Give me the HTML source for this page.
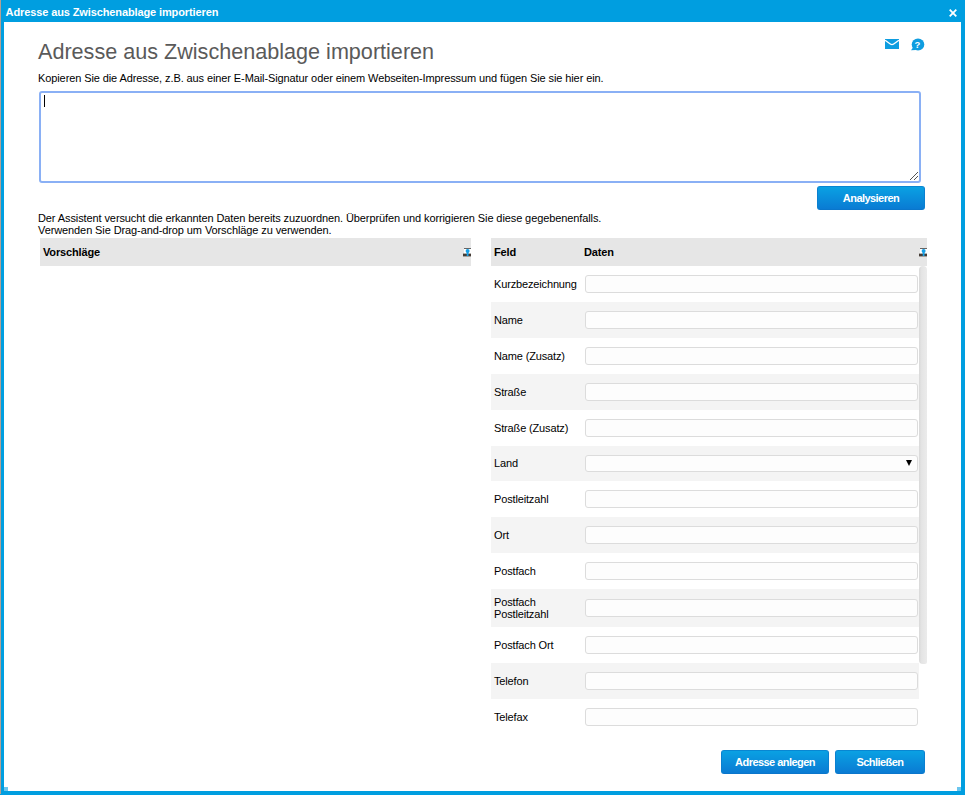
<!DOCTYPE html>
<html lang="de">
<head>
<meta charset="utf-8">
<title>Adresse aus Zwischenablage importieren</title>
<style>
html,body{margin:0;padding:0;}
body{width:965px;height:795px;position:relative;overflow:hidden;background:#fff;
  font-family:"Liberation Sans",Arial,sans-serif;font-size:11px;color:#000;}
*{box-sizing:border-box;}
.abs{position:absolute;}
#frame{left:0;top:0;width:965px;height:795px;background:#009ee0;}
#edge{left:0;top:0;width:1px;height:794px;background:#b4a094;}
.cs{width:4px;height:4px;top:787px;background:#6cc6ee;}
#titlebar{left:0;top:0;width:965px;height:22px;}
#titletext{left:5.6px;top:6px;font-weight:bold;font-size:11px;color:#fff;line-height:13px;white-space:nowrap;letter-spacing:-0.115px;}
#close{left:948px;top:8px;width:10px;height:10px;}
#content{left:4px;top:22px;width:957px;height:769px;background:#fff;}
h1{position:absolute;left:38px;top:39px;margin:0;font-size:21.6px;font-weight:normal;color:#5a5a5a;line-height:26px;white-space:nowrap;}
.p{white-space:nowrap;line-height:13px;letter-spacing:-0.1px;}
#ta{left:39px;top:91px;width:882px;height:92px;border:2px solid #8ab0f5;border-radius:3px;background:#fff;}
#caret{left:44px;top:95px;width:1px;height:12px;background:#000;}
.btn{position:absolute;height:24px;border-radius:3px;color:#fff;font-weight:bold;font-size:11px;text-align:center;line-height:22px;letter-spacing:-0.55px;
  background:linear-gradient(#0aa1e3,#0a7bd3);border:1px solid;border-color:#0887d2 #0a80d0 #0a76cb;}
.th{background:#e6e6e6;height:28px;top:238px;font-weight:bold;}
.th span{position:absolute;top:8px;line-height:13px;letter-spacing:-0.15px;}
.row{position:absolute;left:491px;width:428px;}
.row.g{background:#f4f4f4;}
.row .l{position:absolute;left:3px;line-height:12px;letter-spacing:-0.15px;}
.in{position:absolute;left:94px;width:333px;height:18px;border:1px solid #dcdcdc;border-radius:3px;background:#fdfdfd;}
#sb{left:919px;top:266px;width:8px;height:398px;background:linear-gradient(90deg,#d9d9d9,#e5e5e5 35%,#ebebeb);border-radius:4px 4px 2px 4px;}
.arr{position:absolute;right:5px;top:4px;width:0;height:0;border-left:3.5px solid transparent;border-right:3.5px solid transparent;border-top:6px solid #000;}
.hi{position:absolute;top:10px;width:8px;height:9px;overflow:hidden;}
</style>
</head>
<body>
<div id="frame" class="abs"></div>
<div id="edge" class="abs"></div>
<div id="titlebar" class="abs">
  <div id="titletext" class="abs">Adresse aus Zwischenablage importieren</div>
  <svg id="close" class="abs" viewBox="0 0 10 10"><path d="M1.7 1.7 L8.3 8.3 M8.3 1.7 L1.7 8.3" stroke="#fff" stroke-width="1.8" fill="none"/></svg>
</div>
<div id="content" class="abs"></div>
<div class="abs cs" style="left:4px;"></div><div class="abs cs" style="left:957px;"></div>

<h1>Adresse aus Zwischenablage importieren</h1>
<div class="abs p" style="left:38px;top:72px;">Kopieren Sie die Adresse, z.B. aus einer E-Mail-Signatur oder einem Webseiten-Impressum und fügen Sie sie hier ein.</div>

<div id="ta" class="abs"></div>
<svg class="abs" style="left:885px;top:39px;" width="14" height="10" viewBox="0 0 14 10"><rect x="0" y="0" width="14" height="10" fill="#0e9de0"/><path d="M0 1.2 C3 3.2 5.6 5.7 7 5.7 C8.4 5.7 11 3.2 14 1.2" stroke="#fff" stroke-width="1.3" fill="none"/></svg>
<svg class="abs" style="left:910px;top:37px;" width="16" height="15" viewBox="0 0 16 15"><ellipse cx="8" cy="7.55" rx="6.3" ry="6" fill="#0e9de0"/><path d="M3 10.4 L1 13.3 L6 12.9 Z" fill="#0e9de0"/><text x="7.4" y="10.9" text-anchor="middle" font-family="Liberation Sans, Arial, sans-serif" font-weight="bold" font-size="9.5" fill="#fff">?</text></svg>
<svg class="abs" style="left:908px;top:170px;" width="11" height="11" viewBox="0 0 11 11"><path d="M10 2 L2 10 M10 6 L6 10" stroke="#555" stroke-width="1" fill="none" shape-rendering="crispEdges"/></svg>

<div id="caret" class="abs"></div>

<div class="btn" style="left:817px;top:186px;width:108px;">Analysieren</div>

<div class="abs p" style="left:38px;top:212px;">Der Assistent versucht die erkannten Daten bereits zuzuordnen. Überprüfen und korrigieren Sie diese gegebenenfalls.</div>
<div class="abs p" style="left:38px;top:224px;">Verwenden Sie Drag-and-drop um Vorschläge zu verwenden.</div>

<div class="abs th" style="left:40px;width:431px;"><span style="left:3px;">Vorschläge</span><svg class="hi" style="left:423px;" viewBox="0 0 8 9"><rect x="1" y="0" width="7" height="6" fill="#fff"/><rect x="1" y="0" width="7" height="1" fill="#666"/><rect x="0" y="5.6" width="8" height="2.8" fill="#453c36"/><circle cx="4.6" cy="3" r="2" fill="#169fe6"/><rect x="3.7" y="3" width="1.8" height="5" fill="#169fe6"/></svg></div>
<div class="abs th" style="left:491px;width:436px;"><span style="left:3px;">Feld</span><span style="left:93px;">Daten</span><svg class="hi" style="left:428px;" viewBox="0 0 8 9"><rect x="1" y="0" width="7" height="6" fill="#fff"/><rect x="1" y="0" width="7" height="1" fill="#666"/><rect x="0" y="5.6" width="8" height="2.8" fill="#453c36"/><circle cx="4.6" cy="3" r="2" fill="#169fe6"/><rect x="3.7" y="3" width="1.8" height="5" fill="#169fe6"/></svg></div>

<div id="rows">
<div class="row" style="top:266px;height:36px;"><div class="l" style="top:12px;">Kurzbezeichnung</div><div class="in" style="top:9px;height:18px;"></div></div>
<div class="row g" style="top:302px;height:36px;"><div class="l" style="top:12px;">Name</div><div class="in" style="top:9px;height:18px;"></div></div>
<div class="row" style="top:338px;height:36px;"><div class="l" style="top:12px;">Name (Zusatz)</div><div class="in" style="top:9px;height:18px;"></div></div>
<div class="row g" style="top:374px;height:36px;"><div class="l" style="top:12px;">Straße</div><div class="in" style="top:9px;height:18px;"></div></div>
<div class="row" style="top:410px;height:36px;"><div class="l" style="top:12px;">Straße (Zusatz)</div><div class="in" style="top:9px;height:18px;"></div></div>
<div class="row g" style="top:446px;height:35px;"><div class="l" style="top:11px;">Land</div><div class="in" style="top:9px;height:17px;"><span class="arr"></span></div></div>
<div class="row" style="top:481px;height:36px;"><div class="l" style="top:12px;">Postleitzahl</div><div class="in" style="top:9px;height:18px;"></div></div>
<div class="row g" style="top:517px;height:36px;"><div class="l" style="top:12px;">Ort</div><div class="in" style="top:9px;height:18px;"></div></div>
<div class="row" style="top:553px;height:36px;"><div class="l" style="top:12px;">Postfach</div><div class="in" style="top:9px;height:18px;"></div></div>
<div class="row g" style="top:589px;height:38px;"><div class="l" style="top:7px;">Postfach<br>Postleitzahl</div><div class="in" style="top:10px;height:18px;"></div></div>
<div class="row" style="top:627px;height:36px;"><div class="l" style="top:12px;">Postfach Ort</div><div class="in" style="top:9px;height:18px;"></div></div>
<div class="row g" style="top:663px;height:36px;"><div class="l" style="top:12px;">Telefon</div><div class="in" style="top:9px;height:18px;"></div></div>
<div class="row" style="top:699px;height:36px;"><div class="l" style="top:12px;">Telefax</div><div class="in" style="top:9px;height:18px;"></div></div>
</div><!--/rows-->
<div id="sb" class="abs"></div>

<div class="btn" style="left:721px;top:750px;width:108px;">Adresse anlegen</div>
<div class="btn" style="left:835px;top:750px;width:90px;">Schließen</div>
</body>
</html>
